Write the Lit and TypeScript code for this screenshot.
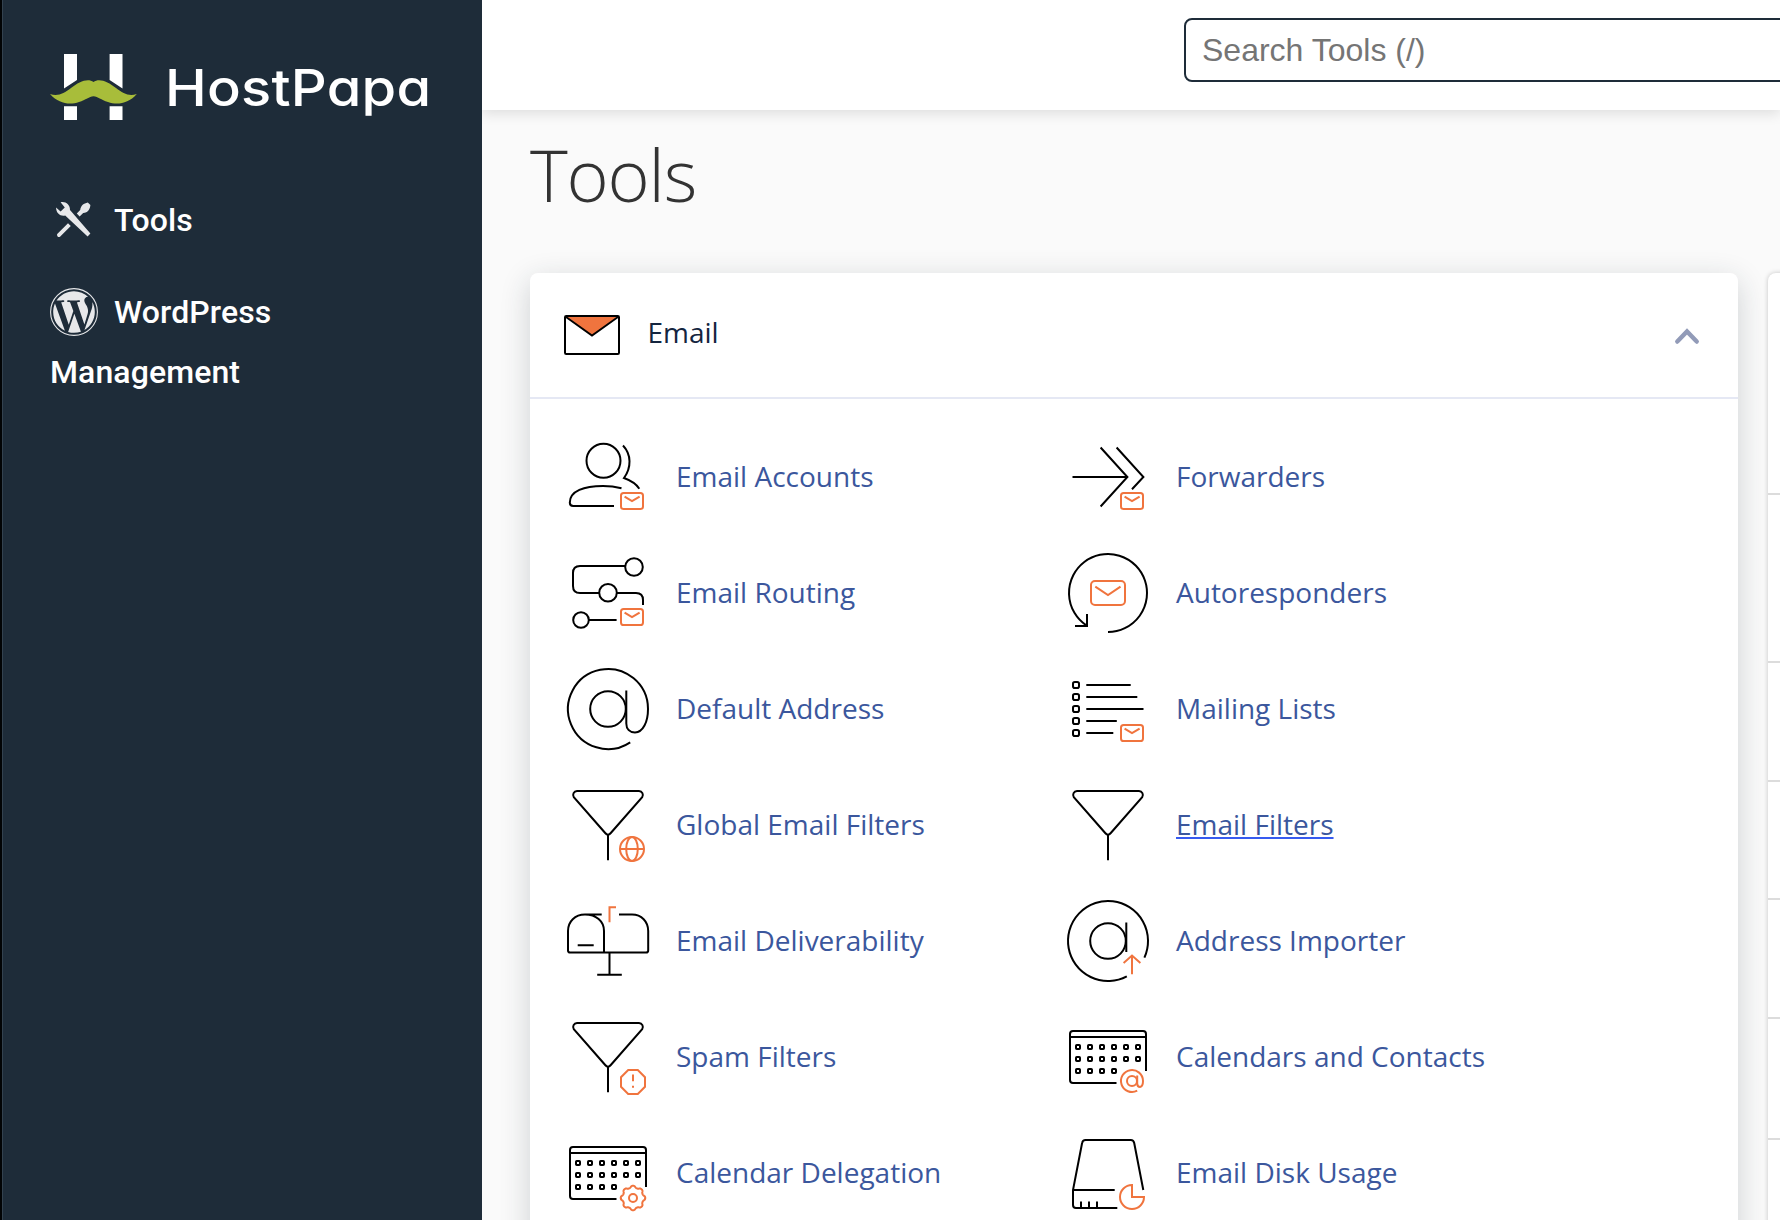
import { LitElement, html, svg, css, type TemplateResult } from "lit";
import { customElement, property } from "lit/decorators.js";
import { classMap } from "lit/directives/class-map.js";

type Glyph = TemplateResult;

const funnel = svg`<path d="M17 14H79A4 4 0 0 1 82.2 20.2L50.8 56Q48 59.4 45.2 56L13.8 20.2A4 4 0 0 1 17 14Z M48 58V83.3"/>`;

const mailBadge = svg`<g class="accent"><rect x="61" y="64" width="22" height="16" rx="2.6"/><path d="M64.6 67.6L72 72.2L79.6 67.6"/></g>`;

const calendarCells = [38, 50, 62].flatMap((y) =>
  [18, 30, 42, 54, 66, 78]
    .filter((x) => y < 62 || x < 60)
    .map((x) => svg`<rect x=${x - 2} y=${y - 2} width="4" height="4" rx="0.8"/>`)
);

const calendar = svg`<path d="M86 62V25Q86 22 83 22H13Q10 22 10 25V71Q10 74 13 74H56.5 M10 28H86"/>${calendarCells}`;

// Closed outline of an eight-lobed cog centred on (73, 73).
const cogOutline = (() => {
  const points: string[] = [];
  for (let i = 0; i <= 160; i++) {
    const t = (i / 160) * Math.PI * 2;
    const wave = Math.cos(8 * t);
    const r = 11.3 + 0.95 * Math.sign(wave) * Math.pow(Math.abs(wave), 0.6);
    points.push(`${(73 + r * Math.cos(t)).toFixed(2)} ${(73 + r * Math.sin(t)).toFixed(2)}`);
  }
  return `M${points.join("L")}Z`;
})();

const glyphs: Record<string, Glyph> = {
  accounts: svg`<circle cx="43.5" cy="31.8" r="17"/>
    <path d="M61.5 59.2C55 57.6 49 57 43 57C24 57 10 62 9.8 73.5Q9.8 77 13.2 77H54"/>
    <path d="M63 16.5C71.5 25.5 71.5 38.5 64 49C70 51.2 76 54.5 79.3 59.7"/>${mailBadge}`,
  forwarders: svg`<path d="M12.5 48H67 M40.6 18.5L67.4 48L40.6 77.5 M56.6 18.5L83.4 48L72 60.3"/>${mailBadge}`,
  routing: svg`<circle cx="74" cy="22" r="8.8"/><circle cx="48" cy="47.8" r="8.8"/><circle cx="21" cy="75" r="7.8"/>
    <path d="M65 21H20Q13 21 13 28V41Q13 48 20 48H39 M57 48H76Q83 48 83 55V60 M29 75H56.6"/>${mailBadge}`,
  autoresponders: svg`<path d="M48 87A39 39 0 1 0 26.3 80.4 M15 81H27V69"/>
    <g class="accent"><rect x="31" y="36" width="34" height="24" rx="4"/><path d="M35.3 41.6L48 50L60.5 41.6"/></g>`,
  address: svg`<circle cx="48" cy="48" r="17.8"/>
    <path d="M66.3 29.4V62.5C66.3 68 69.8 71.4 75 71.4C83 71.4 88 61 88 48A40 40 0 1 0 70.2 81.3"/>`,
  lists: svg`${[24, 36, 48, 60, 72].map((y) => svg`<rect x="13" y=${y - 3} width="6" height="6" rx="1.8"/>`)}
    <path d="M26.3 24H70.7 M26.3 36H77.3 M26.3 48H83.5 M26.3 60H56.8 M26.3 72H53.3"/>${mailBadge}`,
  globalFilters: svg`${funnel}<g class="accent"><circle cx="72" cy="72" r="12"/><ellipse cx="72" cy="72" rx="5.8" ry="12"/><path d="M60 72H84"/></g>`,
  filters: svg`${funnel}`,
  mailbox: svg`<path d="M41.7 21.5H25C15 21.5 8 28.5 8 38V57.5Q8 59.6 10.2 59.6H86Q88.2 59.6 88.2 57.5V38C88.2 28.5 81.5 21.5 72 21.5H59 M25 21.5C36 21.5 44 28 44 38V59.6 M17.7 52.2H33.7 M49.5 60V81.7 M37.2 81.8H61.8"/>
    <path class="accent" d="M49.5 29.3V14.2H56"/>`,
  importer: svg`<circle cx="48" cy="48" r="17.8"/><path d="M66.3 29.4V59 M84.4 64.6A40 40 0 1 0 66.8 83.3"/>
    <path class="accent" d="M72 81.3V63 M63.6 70L72 62.6L80.4 70"/>`,
  spam: svg`${funnel}<g class="accent"><path d="M68.2 61H77.8L85 68.2V77.8L77.8 85H68.2L61 77.8V68.2Z"/><path d="M73 65.6V72.2 M73 76.8V78.8"/></g>`,
  contacts: svg`${calendar}<g class="accent"><circle cx="72" cy="72" r="5"/>
    <path d="M77.2 66.6V74.6Q77.4 78 80 78Q83 77.4 83 72A11 11 0 1 0 77.2 81.7"/></g>`,
  delegation: svg`${calendar}<g class="accent"><path d=${cogOutline}/><circle cx="73" cy="73" r="4"/></g>`,
  disk: svg`<path d="M83.3 65L74.2 18Q73.6 15 70.8 15H25.6Q22.6 15 22.1 18L13 65V80Q13 83 16 83H57.3 M13 65H54.7 M21 76.5V83 M29 76.5V83 M37 76.5V83"/>
    <path class="accent" d="M72 60A12 12 0 1 0 84 72H72Z"/>`,
};

@customElement("tool-link")
class ToolLink extends LitElement {
  @property() icon = "";
  @property() label = "";
  @property({ type: Boolean }) active = false;

  static styles = css`
    :host { display: block; }
    .row { display: flex; align-items: center; height: 116px; gap: 20px; color: #3b579d; text-decoration: none; }
    .glyph { width: 96px; height: 96px; flex: none; fill: none; stroke: #000; stroke-width: 2; }
    .accent { stroke: #f0743e; }
    .label { margin-bottom: 2px; font: 400 28px/40px "Open Sans", sans-serif; white-space: nowrap; }
    .active { text-decoration: underline 2px #375bf0; text-underline-offset: 2px; text-decoration-skip-ink: none; }
  `;

  render() {
    return html`<a class="row" href="#">
      <svg class="glyph" viewBox="0 0 96 96" aria-hidden="true">${glyphs[this.icon]}</svg>
      <span class=${classMap({ label: true, active: this.active })}>${this.label}</span>
    </a>`;
  }
}

@customElement("side-bar")
class SideBar extends LitElement {
  static styles = css`
    :host { display: block; box-sizing: border-box; width: 482px; height: 1220px; background: #1e2c39; border-left: 2px solid #020405; box-shadow: inset 1px 0 #33424f; }
    .brand { display: flex; align-items: center; padding: 54px 0 0 48px; height: 67px; }
    .mark { width: 87px; height: 67px; flex: none; }
    .name { margin-left: 28px; font: 500 50.5px/60px Inter, sans-serif; font-feature-settings: "cv11"; letter-spacing: 0.2px; color: #fff; white-space: nowrap; transform: scaleX(1.11); transform-origin: 0 50%; }
    .nav { padding: 69px 0 0 48px; color: #fff; font: 500 32px/60px Roboto, sans-serif; letter-spacing: 0.1px; }
    .item { display: flex; align-items: center; }
    .icon { width: 48px; height: 48px; flex: none; margin-right: 16px; fill: #e7e8ea; }
    .second { margin-top: 32px; }
  `;

  render() {
    return html`
      <div class="brand">
        <svg class="mark" viewBox="50 54 87 67" aria-hidden="true">
          <path fill="#fff" d="M64 54H77V80L64 88.4Z M109.6 54H122.5V88.4L109.6 80Z M64 106.3H77V120H64Z M109.6 106.3H122.5V120H109.6Z"/>
          <path fill="#a8bd3a" d="M50 94C58 96.6 64 93.5 71 88C79 81.5 88 77.6 93.5 82C99 77.6 108 81.5 116 88C123 93.5 129 96.6 136.8 94C128 104 117 105.2 108 102C101 99.6 98 96.6 93.5 96.2C89 96.6 86 99.6 79 102C70 105.2 59 104 50 94Z"/>
        </svg>
        <span class="name">HostPapa</span>
      </div>
      <div class="nav">
        <div class="item">
          <svg class="icon" viewBox="50 196 48 48" aria-hidden="true">
            <path d="M60.6 202.2C65.5 201 70.3 204.6 70 210L90.4 233.6L87.6 236.6L65.2 215.4C60.8 216.6 56.2 213.4 56 207.4L60.6 211.4L64.8 207.4Z"/>
            <path d="M87.8 202.6L90.4 205C90 209.5 88 212.4 83.2 213L79.6 216.4L76.8 213.6L80.2 210C81 205.4 83.6 203.6 87.8 202.6Z M68 223.2L70.8 226L60 236.8Q58.6 237.4 57.6 236.4Q56.6 235 57.2 234Z"/>
          </svg>
          <span>Tools</span>
        </div>
        <div class="item second">
          <svg class="icon" viewBox="0 0 24 24" aria-hidden="true">
            <circle cx="12" cy="12" r="11.7" fill="none" stroke="#e7e8ea" stroke-width="0.55"/>
            <path transform="translate(0.42 0.42) scale(0.965)" d="M21.469 6.825c.84 1.537 1.318 3.3 1.318 5.175 0 3.979-2.156 7.456-5.363 9.325l3.295-9.527c.615-1.54.82-2.771.82-3.864 0-.405-.026-.78-.07-1.11m-7.981.105c.647-.03 1.232-.105 1.232-.105.582-.075.514-.93-.067-.899 0 0-1.755.135-2.88.135-1.064 0-2.85-.15-2.85-.15-.585-.03-.661.855-.075.885 0 0 .54.061 1.125.09l1.68 4.605-2.37 7.08L5.354 6.9c.649-.03 1.234-.1 1.234-.1.585-.075.516-.93-.065-.896 0 0-1.746.138-2.874.138-.2 0-.438-.008-.69-.015C4.911 3.15 8.235 1.215 12 1.215c2.809 0 5.365 1.072 7.286 2.833-.046-.003-.091-.009-.141-.009-1.06 0-1.812.923-1.812 1.914 0 .89.513 1.643 1.06 2.531.411.72.89 1.643.89 2.977 0 .915-.354 1.994-.821 3.479l-1.075 3.585-3.9-11.61.001.014zM12 22.784c-1.059 0-2.081-.153-3.048-.437l3.237-9.406 3.315 9.087c.024.053.05.101.078.149-1.12.393-2.325.609-3.582.609M1.211 12c0-1.564.336-3.05.935-4.39L7.29 21.709C3.694 19.96 1.212 16.271 1.211 12"/>
          </svg>
          <span>WordPress</span>
        </div>
        <div>Management</div>
      </div>
    `;
  }
}

@customElement("app-root")
class AppRoot extends LitElement {
  static styles = css`
    :host { display: flex; width: 1780px; height: 1220px; overflow: hidden; background: #fafafa; }
    side-bar { flex: none; }
    .main { flex: 1; min-width: 0; height: 1220px; overflow: hidden; display: flex; flex-direction: column; }
    .top { box-sizing: border-box; height: 110px; flex: none; background: #fff; box-shadow: 0 4px 12px rgba(0, 0, 0, 0.11); padding: 18px 0 0 702px; }
    .search { box-sizing: border-box; display: block; width: 640px; height: 64px; border: 2px solid #1e2c39; border-radius: 8px; padding: 0 16px; background: #fff; font: 400 32px/40px "Liberation Sans", Arial, sans-serif; outline: none; }
    .search::placeholder { color: #757575; opacity: 1; }
    .title { box-sizing: border-box; flex: none; margin: 0; padding: 15px 0 0 48px; height: 163px; font: 300 72px/98px "Open Sans", sans-serif; letter-spacing: -1.2px; color: #333; }
    .board { display: flex; flex: none; gap: 30px; padding-left: 48px; align-items: flex-start; }
    .card { width: 1208px; height: 1100px; flex: none; background: #fff; border-radius: 8px; box-shadow: 0 8px 30px rgba(30, 44, 57, 0.2); }
    .head { box-sizing: border-box; display: flex; align-items: center; height: 126px; border-bottom: 2px solid #e5e8f4; padding: 0 38px 0 34px; }
    .envelope { width: 56px; height: 40px; }
    .heading { margin: 0 0 6px 27.5px; flex: 1; font: 400 28px/40px "Open Sans", sans-serif; color: #14253f; }
    .chevron { width: 26px; height: 18px; margin-top: 2px; }
    .tools { display: grid; grid-template-columns: 500px 500px; padding: 20px 0 0 30px; }
    .aside { width: 600px; flex: none; background: #fff; border-radius: 8px; box-shadow: 0 0 5px rgba(0, 0, 0, 0.22); }
    .slot { box-sizing: border-box; border-bottom: 2px solid #dcdcdc; }
    .h222 { height: 222px; }
    .h168 { height: 168px; }
    .h119 { height: 118.5px; }
    .h121 { height: 121.5px; }
  `;

  private tools = [
    ["accounts", "Email Accounts"],
    ["forwarders", "Forwarders"],
    ["routing", "Email Routing"],
    ["autoresponders", "Autoresponders"],
    ["address", "Default Address"],
    ["lists", "Mailing Lists"],
    ["globalFilters", "Global Email Filters"],
    ["filters", "Email Filters"],
    ["mailbox", "Email Deliverability"],
    ["importer", "Address Importer"],
    ["spam", "Spam Filters"],
    ["contacts", "Calendars and Contacts"],
    ["delegation", "Calendar Delegation"],
    ["disk", "Email Disk Usage"],
  ];

  private slots = ["h222", "h168", "h119", "h119", "h119", "h121", "h119"];

  render() {
    return html`
      <side-bar></side-bar>
      <div class="main">
        <div class="top"><input class="search" type="text" placeholder="Search Tools (/)" /></div>
        <h1 class="title">Tools</h1>
        <div class="board">
          <section class="card">
            <div class="head">
              <svg class="envelope" viewBox="0 0 56 40" aria-hidden="true">
                <path d="M2 1.5L28 20.6L54 1.5Z" fill="#f0743e"/>
                <path d="M2 2L28 20.6L54 2" fill="none" stroke="#000" stroke-width="1.8"/>
                <rect x="1" y="1" width="54" height="38" rx="1.2" fill="none" stroke="#000" stroke-width="2"/>
              </svg>
              <h2 class="heading">Email</h2>
              <svg class="chevron" viewBox="0 0 26 18" fill="none" stroke="#929bb8" stroke-width="4.4" stroke-linecap="round" aria-hidden="true">
                <path d="M3.3 14.6L13 4.4L22.7 14.6"/>
              </svg>
            </div>
            <div class="tools">
              ${this.tools.map(
                ([icon, label]) => html`<tool-link .icon=${icon} .label=${label} .active=${icon === "filters"}></tool-link>`
              )}
            </div>
          </section>
          <section class="aside">
            ${this.slots.map((size) => html`<div class=${classMap({ slot: true, [size]: true })}></div>`)}
          </section>
        </div>
      </div>
    `;
  }
}
